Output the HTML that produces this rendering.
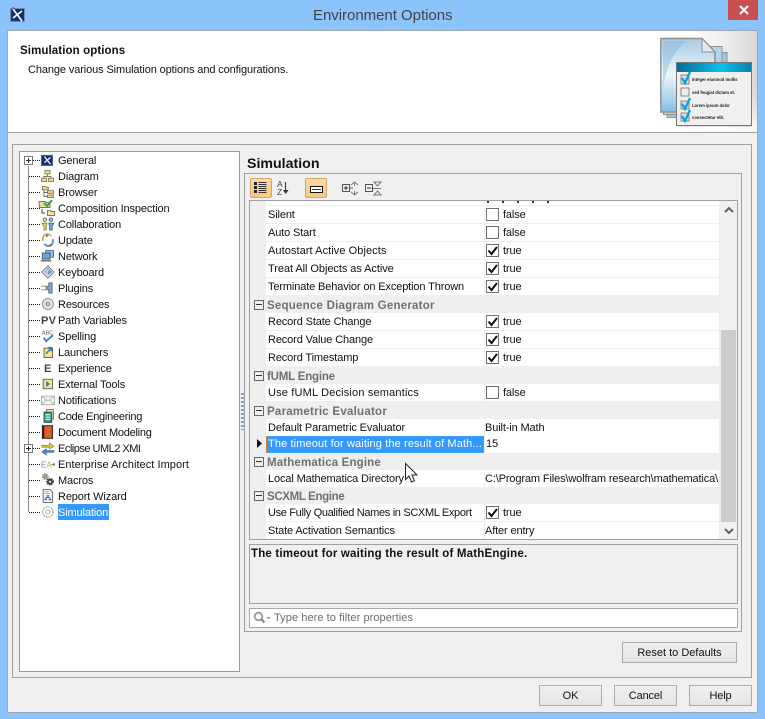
<!DOCTYPE html>
<html><head><meta charset="utf-8"><style>
html,body{margin:0;padding:0}
body{width:765px;height:719px;overflow:hidden;position:relative;background:#8ac4fb;font-family:"Liberation Sans",sans-serif;font-size:11px;letter-spacing:-.13px;color:#111}
div,svg,span{position:absolute;box-sizing:border-box}
.t{height:16px;line-height:18px;white-space:nowrap}
.i{width:16px;height:16px;left:41px;overflow:visible;transform:scale(.86);transform-origin:0 50%}
.n{left:266px;width:218px;height:17px;background:#fff}
.v{left:485px;width:234px;height:17px;background:#fff}
.nt{left:268px}.vt{left:503px}.vp{left:486px}
.s{left:267px;font-weight:bold;font-size:11.5px;color:#707070;letter-spacing:.15px}
.m{left:254px;width:10px;height:10px;border:1px solid #666;background:#efefef}
.m:after{content:"";position:absolute;left:1px;top:3px;width:6px;height:1px;background:#333}
.c{left:486px;width:13px;height:13px;border:1px solid #707070;background:#fff}
.b{border:1px solid #adadad;background:linear-gradient(#f0f0f0,#e5e5e5);text-align:center;line-height:20px;color:#111}
</style></head><body>

<svg style="left:10px;top:6px" width="16" height="17" viewBox="0 0 16 17"><rect x=".5" y="2.500" width="14" height="13" fill="#14306f" stroke="#6e8bb8"/><path d="M3 3l9 12M12 5L3 12" stroke="#fff" stroke-width="1.600"/><path d="M3 1l1 2" stroke="#345"/></svg>
<div class="t" style="left:313px;top:6px;font-size:15px;letter-spacing:-.03px;height:20px;line-height:20px;color:#444">Environment Options</div>
<div style="left:728px;top:0;width:30px;height:20px;background:#c75050"></div>
<svg style="left:728px;top:0" width="30" height="20"><path d="M12 6l8 8M20 6l-8 8" stroke="#fff" stroke-width="2"/></svg>

<div style="left:7px;top:30px;width:751px;height:683px;background:#f0f0f0;border:1px solid #9aa8b5"></div>
<div style="left:8px;top:31px;width:749px;height:102px;background:#fff;border-bottom:1px solid #a0a0a0"></div>
<div class="t" style="left:20px;top:42px;font-weight:bold;font-size:11.5px;letter-spacing:.1px">Simulation options</div>
<div class="t" style="left:28px;top:61px;letter-spacing:-.11px">Change various Simulation options and configurations.</div>

<svg style="left:660px;top:31px;font-family:'Liberation Sans',sans-serif;letter-spacing:0" width="97" height="101" viewBox="0 0 97 101">
<defs><linearGradient id="bg" x1="0" x2="1" y1="0" y2="0"><stop offset="0" stop-color="#fff"/><stop offset=".5" stop-color="#eee"/><stop offset="1" stop-color="#d8d8d8"/></linearGradient>
<linearGradient id="bf" x1="0" x2="0" y1="0" y2="1"><stop offset="0" stop-color="#fff" stop-opacity="0"/><stop offset="1" stop-color="#fff" stop-opacity=".85"/></linearGradient>
<linearGradient id="d" x1="0" x2="0" y1="0" y2="1"><stop offset="0" stop-color="#a9cbe6"/><stop offset=".5" stop-color="#eef6fb"/><stop offset="1" stop-color="#84bfe6"/></linearGradient>
<linearGradient id="h" x1="0" x2="1" y1="0" y2="0"><stop offset="0" stop-color="#056d92"/><stop offset=".6" stop-color="#0cc0ef"/><stop offset="1" stop-color="#0582ac"/></linearGradient></defs>
<rect x="30" width="67" height="101" fill="url(#bg)"/>
<rect x="30" y="60" width="67" height="41" fill="url(#bf)"/>
<rect x="7" y="21.500" width="60" height="65" fill="#9cc8e6" stroke="#909090"/>
<rect x="3.500" y="15.500" width="58.500" height="68" fill="#b4d6ec" stroke="#909090"/>
<path d="M.8 7.500H42L55 21V81H.8Z" fill="url(#d)" stroke="#8e8e8e" stroke-width="1.400"/>
<path d="M42 7.500V21H55Z" fill="#dfeaf5" stroke="#8e8e8e"/>
<path d="M3 10H26C12 22 5 40 3 60Z" fill="#7eaed3" opacity=".4"/>
<rect x="17.500" y="32" width="74" height="63.500" fill="#000" opacity=".18"/>
<rect x="16.500" y="31.500" width="75" height="63" fill="#f0f0f0" stroke="#777" stroke-width="1"/>
<rect x="17" y="32" width="74" height="9" fill="url(#h)"/>
<rect x="21" y="44" width="8" height="9" fill="#ddd" stroke="#888"/>
<rect x="21" y="57" width="8" height="8" fill="#eee" stroke="#888"/>
<rect x="21" y="70" width="8" height="8" fill="#ddd" stroke="#888"/>
<rect x="21" y="82" width="8" height="8" fill="#ddd" stroke="#888"/>
<path d="M22 47l3 5 5-11M22 73l3 5 5-11M22 85l3 5 5-11" fill="none" stroke="#0a9fe0" stroke-width="2.200"/>
<g font-size="4.200" font-weight="bold" fill="#222">
<text x="32" y="50">Integer eiusmod mollis</text><text x="32" y="63">sed feugiat dictum et.</text><text x="32" y="76">Lorem ipsum dolor</text><text x="32" y="88">consectetur elit.</text></g>
</svg>

<div style="left:12px;top:144px;width:740px;height:534px;border:1px solid #a0a0a0"></div>

<!-- tree -->
<div style="left:19px;top:151px;width:221px;height:521px;background:#fff;border:1px solid #9a9a9a"></div>
<svg style="left:24px;top:152px" width="30" height="366"><path transform="translate(0,.5)" d="M4.500 14V360M9 8H16M5 24H16M5 40H16M5 56H16M5 72H16M5 88H16M5 104H16M5 120H16M5 136H16M5 152H16M5 168H16M5 184H16M5 200H16M5 216H16M5 232H16M5 248H16M5 264H16M5 280H16M9 296H16M5 312H16M5 328H16M5 344H16M5 360H16" stroke="#111" stroke-dasharray="1 1" fill="none"/></svg>
<div style="left:24px;top:156px;width:9px;height:9px;border:1px solid #777;background:#fff"></div>
<svg style="left:24px;top:156px" width="9" height="9"><path d="M2 4.500H7M4.500 2V7" stroke="#333"/></svg>
<div style="left:24px;top:444px;width:9px;height:9px;border:1px solid #777;background:#fff"></div>
<svg style="left:24px;top:444px" width="9" height="9"><path d="M2 4.500H7M4.500 2V7" stroke="#333"/></svg>

<svg class="i" style="top:152px"><rect x=".5" y="2.500" width="13" height="12" fill="#14306f" stroke="#4f6ea5"/><path d="M4 4l7 9M11 5L4 11" stroke="#fff" stroke-width="1.400"/></svg>
<svg class="i" style="top:168px"><g fill="#f6d78a" stroke="#8a7a50"><rect x="4.500" y="1.500" width="6" height="4"/><rect x=".5" y="10.500" width="6" height="4"/><rect x="8.500" y="10.500" width="6" height="4"/></g><path d="M7.500 6v2.500M3.500 10V8.500H11.500V10" stroke="#666" fill="none"/></svg>
<svg class="i" style="top:184px"><g fill="#f6df95" stroke="#7f7040"><path d="M1.500 1.500h4l1 1h2v3h-7z"/><path d="M7.500 6.500h7v3h-7zM7.500 11.500h7v3h-7z"/></g><path d="M3.500 6v7h4M3.500 8.500h4" stroke="#555" fill="none"/></svg>
<svg class="i" style="top:200px;left:39px;transform:none"><path d="M0 1.500h6l1 1h4v5H.5z" fill="#e8e090" stroke="#777"/><path d="M5 3l3 3 5-6" fill="none" stroke="#3aa53a" stroke-width="2"/><path d="M3 9v4h3" fill="none" stroke="#444"/><path d="M8.500 10.500h3l1 1h3v4h-7z" fill="#f6df95" stroke="#777"/></svg>
<svg class="i" style="top:216px"><circle cx="4.500" cy="3" r="2" fill="#f2d98b" stroke="#6b6b40"/><circle cx="11.500" cy="3" r="2" fill="#9cc4e8" stroke="#40608b"/><path d="M1 7h6L6 11v4H3.500v-4z" fill="#f3d05a" stroke="#7a6a30" stroke-width=".8"/><path d="M9 7h6l-2 4v4h-3v-4z" fill="#6ea6dc" stroke="#305a90" stroke-width=".8"/></svg>
<svg class="i" style="top:232px"><path d="M2.500 9A5.500 5.500 0 0 1 12 3.500" fill="none" stroke="#c9ad50" stroke-width="2"/><path d="M13.500 7A5.500 5.500 0 0 1 4 12.500" fill="none" stroke="#5a9ad6" stroke-width="2.400"/><path d="M6 1l3 2-3 2zM9 14l3 2v-4z" fill="#666"/></svg>
<svg class="i" style="top:248px"><rect x="5.500" y="1.500" width="9" height="8" fill="#8cbce6" stroke="#567"/><rect x="1.500" y="4.500" width="9" height="7" fill="#6ba2dc" stroke="#456"/><path d="M0 13.500h12" stroke="#777" stroke-width="2"/></svg>
<svg class="i" style="top:264px"><path d="M8 1L15 8 8 15 1 8Z" fill="#eee" stroke="#667"/><path d="M8 3L13 8 8 12 4 8Z" fill="#6c9ccc"/><path d="M7 11V6h2.500" stroke="#fff" fill="none"/></svg>
<svg class="i" style="top:280px"><path d="M0 6h6M0 10h6" stroke="#c9b84a" stroke-width="1.500"/><path d="M6 6h3V2h4v12H9v-4H6z" fill="#7aa0c6" stroke="#607080"/></svg>
<svg class="i" style="top:296px"><circle cx="8" cy="8" r="6.500" fill="#e4e4e4" stroke="#888"/><circle cx="8" cy="8" r="4" fill="#d4d4d4"/><circle cx="8" cy="8" r="1.500" fill="#fff" stroke="#777"/></svg>
<div class="t" style="left:41px;top:312px;font-weight:bold;font-size:11px;color:#444;letter-spacing:.3px">PV</div>
<svg class="i" style="top:328px"><text x="1" y="6" font-size="6.500" fill="#555" font-family="Liberation Sans">ABC</text><path d="M3 10l3 4 8-7" fill="none" stroke="#4a80bc" stroke-width="2.200"/></svg>
<svg class="i" style="top:344px"><rect x="3.500" y="3.500" width="10" height="11" fill="#f2e68c" stroke="#555"/><path d="M6 10l5-6M8 3h4v4" stroke="#3478b8" stroke-width="1.800" fill="none"/></svg>
<div class="t" style="left:44px;top:360px;font-weight:bold;color:#444;font-size:11px">E</div>
<svg class="i" style="top:376px"><rect x="2.500" y="2.500" width="11" height="11" fill="#f3e48c" stroke="#555"/><path d="M6 4.500l4.500 3.500L6 11.500z" fill="#3f78b0"/></svg>
<svg class="i" style="top:392px"><rect x=".5" y="3.500" width="15" height="10" fill="#f4f4f4" stroke="#aaa"/><path d="M1 4l7 5L15 4M1 13l5-5M15 13l-5-5" stroke="#aaa" fill="none"/></svg>
<svg class="i" style="top:408px"><rect x="6.500" y=".5" width="8" height="11" fill="#e8e3b0" stroke="#666"/><rect x="3.500" y="3.500" width="9" height="12" fill="#3d9088" stroke="#24514f"/><path d="M5 6h6M5 8h6M5 10h6M5 12h6" stroke="#dff"/></svg>
<svg class="i" style="top:424px"><rect x="1.500" y=".5" width="12" height="15" fill="#c8481e" stroke="#333"/><rect x="1.500" y=".5" width="2" height="15" fill="#222"/><rect x="5" y="2" width="7" height="12" fill="#d9612e"/></svg>
<svg class="i" style="top:440px"><path d="M1 5h9V2l5 4-5 3V7H1z" fill="#e6cf4a" stroke="#7a6a30" stroke-width=".7"/><path d="M15 11H6V9l-5 3.500L6 16v-3h9z" fill="#4f8ccc" stroke="#2a5a90" stroke-width=".7"/></svg>
<svg class="i" style="top:456px"><text x="0" y="12" font-size="9.500" font-family="Liberation Sans"><tspan fill="#5f94d0">E</tspan><tspan fill="#e09a2c">A</tspan></text><path d="M12 8.500h3M14 6.500l2 2-2 2" stroke="#777" fill="none"/></svg>
<svg class="i" style="top:472px"><circle cx="5" cy="4" r="3" fill="#999" stroke="#999" stroke-width="2" stroke-dasharray="1.500 1"/><circle cx="10.500" cy="10" r="3.500" fill="#444" stroke="#444" stroke-width="2" stroke-dasharray="1.500 1"/><circle cx="10.500" cy="10" r="1.200" fill="#fff"/></svg>
<svg class="i" style="top:488px"><path d="M2.500 .5h8l3 3v12h-11z" fill="#fafafa" stroke="#555"/><path d="M4 3h5M4 5h6" stroke="#999"/><rect x="6.500" y="7" width="3" height="2" fill="#3e78b8"/><rect x="4" y="11" width="3" height="2" fill="#3e78b8"/><rect x="9" y="11" width="3" height="2" fill="#3e78b8"/><path d="M8 9v1H5.500v1M8 10h2.500v1" stroke="#3e78b8" fill="none"/></svg>
<svg class="i" style="top:504px"><circle cx="8" cy="8" r="6" fill="#fff" stroke="#777" stroke-dasharray="2 1.200"/><circle cx="8" cy="8" r="2.500" fill="none" stroke="#aaa"/></svg>

<div class="t" style="left:58px;top:152px">General</div>
<div class="t" style="left:58px;top:168px">Diagram</div>
<div class="t" style="left:58px;top:184px">Browser</div>
<div class="t" style="left:58px;top:200px">Composition Inspection</div>
<div class="t" style="left:58px;top:216px">Collaboration</div>
<div class="t" style="left:58px;top:232px">Update</div>
<div class="t" style="left:58px;top:248px">Network</div>
<div class="t" style="left:58px;top:264px">Keyboard</div>
<div class="t" style="left:58px;top:280px">Plugins</div>
<div class="t" style="left:58px;top:296px">Resources</div>
<div class="t" style="left:58px;top:312px">Path Variables</div>
<div class="t" style="left:58px;top:328px">Spelling</div>
<div class="t" style="left:58px;top:344px">Launchers</div>
<div class="t" style="left:58px;top:360px">Experience</div>
<div class="t" style="left:58px;top:376px">External Tools</div>
<div class="t" style="left:58px;top:392px">Notifications</div>
<div class="t" style="left:58px;top:408px;letter-spacing:-.25px">Code Engineering</div>
<div class="t" style="left:58px;top:424px;letter-spacing:-.25px">Document Modeling</div>
<div class="t" style="left:58px;top:440px;letter-spacing:-.5px">Eclipse UML2 XMI</div>
<div class="t" style="left:58px;top:456px;letter-spacing:.05px">Enterprise Architect Import</div>
<div class="t" style="left:58px;top:472px">Macros</div>
<div class="t" style="left:58px;top:488px">Report Wizard</div>
<div class="t" style="left:58px;top:504px;width:51px;background:#3399ff;color:#fff">Simulation</div>

<div style="left:241px;top:393px;width:3px;height:37px;background:repeating-linear-gradient(#7fa6d8 0 2px,transparent 2px 4px)"></div>

<!-- right -->
<div class="t" style="left:247px;top:155px;font-weight:bold;font-size:14.200px;letter-spacing:0;color:#111">Simulation</div>
<div style="left:244px;top:173px;width:498px;height:459px;border:1px solid #a0a0a0"></div>

<div style="left:250px;top:178px;width:22px;height:20px;background:linear-gradient(#fddca8,#fbc77a);border:1px solid #d9a765;border-radius:2px"></div>
<svg style="left:250px;top:178px" width="22" height="20"><rect x="4" y="4" width="3" height="3" fill="#222"/><rect x="4" y="8" width="3" height="3" fill="#222"/><rect x="4" y="12" width="3" height="3" fill="#222"/><path d="M8.500 4.500h8M8.500 6.500h8M8.500 8.500h8M8.500 10.500h8M8.500 12.500h8M8.500 14.500h8" stroke="#333"/></svg>
<div class="t" style="left:277px;top:180px;font-size:8.500px;letter-spacing:0;line-height:8px;height:8px;color:#444">A</div>
<div class="t" style="left:277px;top:188px;font-size:8.500px;letter-spacing:0;line-height:8px;height:8px;color:#444">Z</div>
<svg style="left:283px;top:182px" width="8" height="14"><path d="M2.500 0V8" stroke="#444" stroke-width="1.200"/><path d="M0 8h5.500l-2.700 4z" fill="#333"/></svg>
<div style="left:305px;top:178px;width:22px;height:20px;background:linear-gradient(#fddca8,#fbc77a);border:1px solid #d9a765;border-radius:2px"></div>
<div style="left:310px;top:186px;width:13px;height:7px;background:#fff;border:1px solid #111"></div>
<div style="left:312px;top:189px;width:9px;height:1px;background:#333"></div>
<svg style="left:341px;top:180px" width="20" height="17" fill="none"><rect x="1.500" y="4.500" width="7" height="7" stroke="#555"/><path d="M3 8h4M5 6v4" stroke="#333"/><path d="M10 5l3.500-3L17 5M10 12l3.500 3L17 12M13.500 2v4M13.500 11v4" stroke="#777"/><path d="M9 8h3" stroke="#555"/></svg>
<svg style="left:364px;top:180px" width="20" height="17" fill="none"><rect x="1.500" y="4.500" width="7" height="7" stroke="#555"/><path d="M3 8h4" stroke="#333"/><path d="M10 2h7l-3.500 4zM10 15h7l-3.500-4z" stroke="#777"/><path d="M9 8.500h8" stroke="#777"/></svg>

<div style="left:249px;top:200px;width:489px;height:340px;border:1px solid #a0a0a0;background:#efefef"></div>
<!-- rows -->
<div class="n" style="top:201px;height:4px"></div><div class="v" style="top:201px;height:4px"></div>
<div style="left:487px;top:201px;width:75px;height:2px;background:repeating-linear-gradient(90deg,#333 0 2px,transparent 2px 15px)"></div>

<div class="n" style="top:206px"></div><div class="v" style="top:206px"></div>
<div class="n" style="top:224px"></div><div class="v" style="top:224px"></div>
<div class="n" style="top:242px"></div><div class="v" style="top:242px"></div>
<div class="n" style="top:260px"></div><div class="v" style="top:260px"></div>
<div class="n" style="top:278px"></div><div class="v" style="top:278px"></div>
<div class="n" style="top:313px"></div><div class="v" style="top:313px"></div>
<div class="n" style="top:331px"></div><div class="v" style="top:331px"></div>
<div class="n" style="top:349px"></div><div class="v" style="top:349px"></div>
<div class="n" style="top:384px"></div><div class="v" style="top:384px"></div>
<div class="n" style="top:419px"></div><div class="v" style="top:419px"></div>
<div class="n" style="top:436px;background:#3399ff;border:1px dotted #d88a30"></div><div class="v" style="top:436px"></div>
<div class="n" style="top:470px"></div><div class="v" style="top:470px"></div>
<div class="n" style="top:504px"></div><div class="v" style="top:504px"></div>
<div class="n" style="top:522px"></div><div class="v" style="top:522px"></div>

<div class="t nt" style="top:206px">Silent</div>
<div class="t nt" style="top:224px">Auto Start</div>
<div class="t nt" style="top:242px;letter-spacing:.07px">Autostart Active Objects</div>
<div class="t nt" style="top:260px;letter-spacing:-.06px">Treat All Objects as Active</div>
<div class="t nt" style="top:278px">Terminate Behavior on Exception Thrown</div>
<div class="t s" style="top:297px;letter-spacing:.23px">Sequence Diagram Generator</div>
<div class="t nt" style="top:313px">Record State Change</div>
<div class="t nt" style="top:331px">Record Value Change</div>
<div class="t nt" style="top:349px">Record Timestamp</div>
<div class="t s" style="top:368px;letter-spacing:-.2px">fUML Engine</div>
<div class="t nt" style="top:384px;letter-spacing:.17px">Use fUML Decision semantics</div>
<div class="t s" style="top:403px;letter-spacing:.25px">Parametric Evaluator</div>
<div class="t nt" style="top:419px">Default Parametric Evaluator</div>
<div class="t nt" style="top:435px;color:#fff;letter-spacing:.12px">The timeout for waiting the result of Math...</div>
<div class="t s" style="top:454px">Mathematica Engine</div>
<div class="t nt" style="top:470px">Local Mathematica Directory</div>
<div class="t s" style="top:488px;letter-spacing:-.35px">SCXML Engine</div>
<div class="t nt" style="top:504px;letter-spacing:-.33px">Use Fully Qualified Names in SCXML Export</div>
<div class="t nt" style="top:522px">State Activation Semantics</div>

<div class="m" style="top:300px"></div>
<div class="m" style="top:371px"></div>
<div class="m" style="top:406px"></div>
<div class="m" style="top:457px"></div>
<div class="m" style="top:491px"></div>
<svg style="left:257px;top:439px" width="6" height="9"><path d="M0 0l5 4.500L0 9z" fill="#111"/></svg>

<div class="c" style="top:208px"></div><div class="t vt" style="top:206px">false</div>
<div class="c" style="top:226px"></div><div class="t vt" style="top:224px">false</div>
<div class="c" style="top:244px"></div><div class="t vt" style="top:242px">true</div>
<div class="c" style="top:262px"></div><div class="t vt" style="top:260px">true</div>
<div class="c" style="top:280px"></div><div class="t vt" style="top:278px">true</div>
<div class="c" style="top:315px"></div><div class="t vt" style="top:313px">true</div>
<div class="c" style="top:333px"></div><div class="t vt" style="top:331px">true</div>
<div class="c" style="top:351px"></div><div class="t vt" style="top:349px">true</div>
<div class="c" style="top:386px"></div><div class="t vt" style="top:384px">false</div>
<div class="c" style="top:506px"></div><div class="t vt" style="top:504px">true</div>
<svg style="left:486px;top:200px" width="14" height="320" fill="none" stroke="#111" stroke-width="2"><path d="M2.500 50.500l3 3.500 5.500-7M2.500 68.500l3 3.500 5.500-7M2.500 86.500l3 3.500 5.500-7M2.500 121.500l3 3.500 5.500-7M2.500 139.500l3 3.500 5.500-7M2.500 157.500l3 3.500 5.500-7M2.500 312.500l3 3.500 5.500-7"/></svg>

<div class="t vp" style="top:419px;left:485px">Built-in Math</div>
<div class="t vp" style="top:435px">15</div>
<div style="left:485px;top:470px;width:233px;height:16px;overflow:hidden"><div class="t" style="left:0;top:0">C:\Program Files\wolfram research\mathematica\</div></div>
<div class="t vp" style="top:522px;left:485px">After entry</div>

<!-- scrollbar -->
<div style="left:720px;top:201px;width:17px;height:338px;background:#f0f0f0"></div>
<div style="left:721px;top:330px;width:15px;height:192px;background:#cdcdcd"></div>
<svg style="left:724px;top:206px" width="10" height="8"><path d="M1 6l4-4 4 4" fill="none" stroke="#606060" stroke-width="2"/></svg>
<svg style="left:724px;top:527px" width="10" height="8"><path d="M1 2l4 4 4-4" fill="none" stroke="#606060" stroke-width="2"/></svg>

<!-- description -->
<div style="left:249px;top:544px;width:489px;height:60px;border:1px solid #a0a0a0"></div>
<div class="t" style="left:251px;top:545px;font-weight:bold;font-size:11.5px;letter-spacing:.19px">The timeout for waiting the result of MathEngine.</div>
<div style="left:249px;top:608px;width:489px;height:20px;border:1px solid #a8a8a8;background:#fff"></div>
<svg style="left:253px;top:611px" width="20" height="13" fill="none"><circle cx="5.500" cy="5.500" r="3.800" stroke="#9a9a9a" stroke-width="1.800"/><path d="M8.500 8.500l3 3" stroke="#8a8a8a" stroke-width="2.200"/><path d="M13 6h5l-2.500 2.500z" fill="#aaa"/></svg>
<div class="t" style="left:274px;top:609px;color:#6d6d6d;letter-spacing:.07px">Type here to filter properties</div>

<div class="b" style="left:622px;top:642px;width:115px;height:21px;letter-spacing:0">Reset to Defaults</div>
<div class="b" style="left:539px;top:685px;width:63px;height:21px">OK</div>
<div class="b" style="left:614px;top:685px;width:63px;height:21px">Cancel</div>
<div class="b" style="left:689px;top:685px;width:63px;height:21px">Help</div>

<svg style="left:404px;top:462px" width="15" height="23"><path d="M1.500 1.500V17.500L5 14l2.500 6 3-1.300L8 13h5z" fill="#fff" stroke="#222"/></svg>
</body></html>
